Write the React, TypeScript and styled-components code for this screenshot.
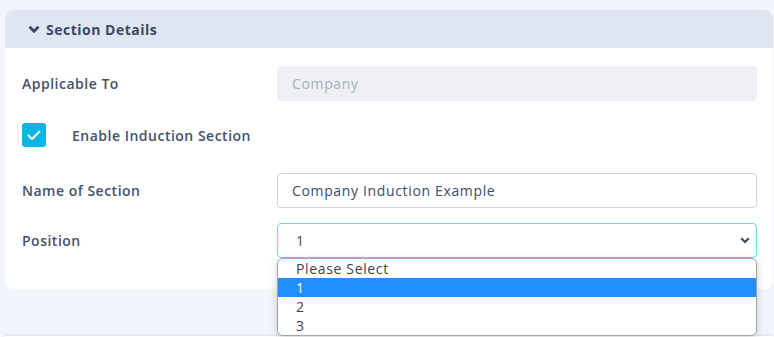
import React from "react";
import styled, { createGlobalStyle } from "styled-components";

const Global = createGlobalStyle`
  html, body { margin: 0; padding: 0; background: #f2f5fc; }
  body { font-family: "Open Sans", "Noto Sans", sans-serif; letter-spacing: 0.65px; }
  * { box-sizing: border-box; }
`;

const Page = styled.div`
  width: 774px;
  height: 337px;
  overflow: hidden;
  padding: 10px 1px 0 5px;
  display: flex;
  flex-direction: column;
  gap: 47px;
`;

const Card = styled.div`
  background: #ffffff;
  border-radius: 8px;
  position: relative;
`;

const NextCard = styled.div`
  background: #ffffff;
  border-radius: 8px 8px 0 0;
  height: 10px;
  box-shadow: 0 -1px 2px rgba(150, 160, 190, 0.35);
`;

const Header = styled.div`
  height: 38px;
  background: #e0e6f1;
  border-radius: 8px 8px 0 0;
  display: flex;
  align-items: center;
  padding-left: 23px;
  gap: 6px;
  font-size: 14px;
  font-weight: 700;
  color: #3b4865;
  letter-spacing: 0.5px;
`;

const Body = styled.div`
  padding: 18px 16px 31px 17px;
  display: flex;
  flex-direction: column;
`;

const Row = styled.div<{ $mt?: number }>`
  display: grid;
  grid-template-columns: 255px 1fr;
  align-items: center;
  margin-top: ${(p) => p.$mt ?? 0}px;
  position: relative;
`;

const Label = styled.div`
  font-size: 14px;
  font-weight: 600;
  letter-spacing: 0.5px;
  color: #465169;
`;

const Field = styled.div<{ $variant?: "disabled" | "focus" | "normal" }>`
  height: 35px;
  border-radius: 4px;
  display: flex;
  align-items: center;
  justify-content: space-between;
  padding: 0 6px 0 14px;
  font-size: 14px;
  color: ${(p) => (p.$variant === "disabled" ? "#a7afc0" : "#414c63")};
  background: ${(p) => (p.$variant === "disabled" ? "#eef0f4" : "#ffffff")};
  border: 1px solid
    ${(p) =>
      p.$variant === "disabled"
        ? "#eef0f4"
        : p.$variant === "focus"
        ? "#70d4f2"
        : "#cfd4dc"};
`;

const SelectValue = styled.span`
  padding-left: 4px;
`;

const CheckRow = styled.div`
  display: flex;
  align-items: center;
  gap: 26px;
  margin-top: 22px;
  margin-bottom: 26px;
`;

const Checkbox = styled.div`
  width: 24px;
  height: 24px;
  border-radius: 3px;
  background: #0db5e6;
  display: flex;
  align-items: center;
  justify-content: center;
`;

const CheckLabel = styled(Label)``;

const DropList = styled.div`
  position: absolute;
  left: 255px;
  right: 0;
  top: 35px;
  background: #ffffff;
  border: 1px solid #a3a3a3;
  border-radius: 6px;
  box-shadow: 0 2px 8px rgba(0, 0, 0, 0.18);
  overflow: hidden;
  z-index: 2;
`;

const Option = styled.div<{ $active?: boolean }>`
  height: 19px;
  line-height: 19px;
  padding-left: 18px;
  font-size: 14px;
  color: ${(p) => (p.$active ? "#ffffff" : "#3a4258")};
  background: ${(p) => (p.$active ? "#1e90ff" : "transparent")};
`;

export default function App() {
  return (
    <>
      <Global />
      <Page>
        <Card>
          <Header>
            <svg width="12" height="9" viewBox="0 0 12 9">
              <path d="M1.5 1.8 L6 6.3 L10.5 1.8" fill="none" stroke="#3b4865" strokeWidth="2.8" />
            </svg>
            Section Details
          </Header>
          <Body>
            <Row>
              <Label>Applicable To</Label>
              <Field $variant="disabled">Company</Field>
            </Row>
            <CheckRow>
              <Checkbox>
                <svg width="14" height="11" viewBox="0 0 14 11">
                  <path d="M1.5 5.5 L5 9 L12.5 1.5" fill="none" stroke="#ffffff" strokeWidth="2" strokeLinecap="round" strokeLinejoin="round" />
                </svg>
              </Checkbox>
              <CheckLabel>Enable Induction Section</CheckLabel>
            </CheckRow>
            <Row>
              <Label>Name of Section</Label>
              <Field>Company Induction Example</Field>
            </Row>
            <Row $mt={15}>
              <Label>Position</Label>
              <Field $variant="focus">
                <SelectValue>1</SelectValue>
                <svg width="10" height="7" viewBox="0 0 10 7">
                  <path d="M1.2 1.2 L5 5 L8.8 1.2" fill="none" stroke="#3b4865" strokeWidth="2" />
                </svg>
              </Field>
              <DropList>
                <Option>Please Select</Option>
                <Option $active>1</Option>
                <Option>2</Option>
                <Option>3</Option>
              </DropList>
            </Row>
          </Body>
        </Card>
        <NextCard />
      </Page>
    </>
  );
}
